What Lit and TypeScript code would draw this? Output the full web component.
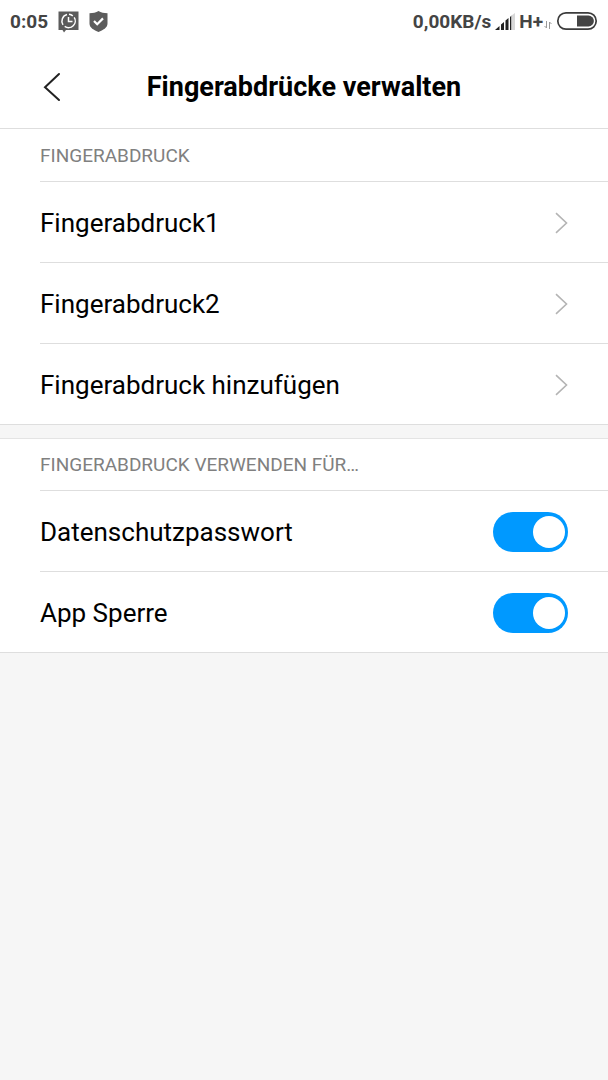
import { LitElement, html, css, svg } from "lit";
import { customElement, property, state } from "lit/decorators.js";

@customElement("status-bar")
class StatusBar extends LitElement {
  static styles = css`
    :host {
      display: flex;
      align-items: center;
      justify-content: space-between;
      box-sizing: border-box;
      height: 44px;
      padding: 0 10px;
      color: #444;
      font-size: 19px;
      font-weight: 700;
      line-height: 24px;
    }
    .side {
      display: flex;
      align-items: center;
    }
    svg {
      display: block;
      flex: none;
    }
    .left {
      gap: 10px;
    }
    .right {
      gap: 4px;
    }
    .network {
      display: flex;
      align-items: center;
      gap: 1px;
    }
    .arrows {
      margin-top: 6px;
    }
    .battery {
      margin-bottom: 2px;
    }
  `;

  render() {
    return html`
      <div class="side left">
        <span>0:05</span>
        <svg width="21" height="22" viewBox="0 0 21 22" aria-hidden="true">
          <path d="M.5 .5h20v18.500H8L6 21.500 4.500 19H.5z" fill="#5c5c5c" />
          <path d="M9 3.600A6.700 6.700 0 0 0 5 13.800M6.700 15.400A6.700 6.700 0 0 0 16.200 6.300M14.800 4.800A6.700 6.700 0 0 0 11 3.300" fill="none" stroke="#fff" stroke-width="1.500" />
          <path d="M10.500 6v4.500h4" fill="none" stroke="#fff" stroke-width="1.500" />
        </svg>
        <svg width="19" height="22" viewBox="0 0 19 22" aria-hidden="true">
          <path d="M9.500 0C7 1.600 4 2.200.5 2.200v10.300c0 4.400 4.500 6.500 9 8.500 4.500-2 9-4.100 9-8.500V2.200C15 2.200 12 1.600 9.500 0z" fill="#5c5c5c" />
          <path d="M5 10l3.200 3.200L14 7.400" fill="none" stroke="#fff" stroke-width="2.200" />
        </svg>
      </div>
      <div class="side right">
        <span>0,00KB/s</span>
        <svg width="20" height="18" viewBox="0 0 20 18" aria-hidden="true">
          <path d="M0 17l4.500-4v4zM6 11.500L9 9v8H6zM10.500 7.500L13.500 5v12h-3zM15 4l1.500-1.500V17H15z" fill="#222" />
          <path d="M16.500 2.500L20 0v17h-3.500z" fill="#d8d8d8" />
        </svg>
        <span class="network">
          <span>H+</span>
          <svg class="arrows" width="8" height="8" viewBox="0 0 8 8" aria-hidden="true">
            <path d="M2.500 0v7M.5 5l2 2M5.500 8V1M7.500 3l-2-2" fill="none" stroke="#999" />
          </svg>
        </span>
        <svg class="battery" width="42" height="20" viewBox="0 0 42 20" aria-hidden="true">
          <rect x="1.800" y="1.800" width="38.400" height="16.400" rx="8.200" fill="none" stroke="#3c3c3c" stroke-width="1.700" />
          <path d="M21 4.600h11.500a5.400 5.400 0 0 1 0 10.800H21z" fill="#444" />
        </svg>
      </div>
    `;
  }
}

@customElement("toggle-row")
class ToggleRow extends LitElement {
  @property() label = "";
  @state() private on = true;

  static styles = css`
    :host {
      display: block;
    }
    .row {
      display: flex;
      align-items: center;
      justify-content: space-between;
      box-sizing: border-box;
      height: 80px;
      padding: 2px 40px 0 0;
      cursor: pointer;
    }
    .switch {
      appearance: none;
      display: flex;
      justify-content: flex-end;
      box-sizing: border-box;
      width: 75px;
      height: 40px;
      margin: 0;
      padding: 4px 3px;
      border-radius: 20px;
      background: #0099ff;
      cursor: pointer;
    }
    .switch::before {
      content: "";
      width: 32px;
      height: 32px;
      border-radius: 50%;
      background: #fff;
    }
    .switch:not(:checked) {
      justify-content: flex-start;
      background: #ccc;
    }
  `;

  private onChange(e: Event) {
    this.on = (e.target as HTMLInputElement).checked;
  }

  render() {
    return html`
      <label class="row">
        <span>${this.label}</span>
        <input class="switch" type="checkbox" role="switch" .checked=${this.on} @change=${this.onChange} />
      </label>
    `;
  }
}

@customElement("app-root")
class AppRoot extends LitElement {
  static styles = css`
    :host {
      display: block;
      min-height: 100vh;
      background: #f6f6f6;
      color: #000;
      font-family: Roboto, "Liberation Sans", sans-serif;
    }
    .top,
    .group {
      background: #fff;
      border-bottom: 1px solid #dedede;
    }
    .bar {
      display: grid;
      grid-template-columns: 64px 1fr 64px;
      align-items: center;
      box-sizing: border-box;
      height: 84px;
      padding: 2px 20px 0;
    }
    .back {
      display: flex;
      align-items: center;
      justify-content: center;
      height: 64px;
      padding: 0;
      border: 0;
      background: none;
      cursor: pointer;
    }
    .title {
      margin: 0;
      text-align: center;
      font-size: 27px;
      font-weight: 700;
      line-height: 32px;
    }
    .group + .group {
      margin-top: 13px;
      border-top: 1px solid #e4e4e4;
    }
    .heading {
      margin: 0;
      padding: 15px 0 13px 40px;
      color: #808080;
      font-size: 19px;
      font-weight: 400;
      line-height: 24px;
    }
    .group + .group .heading {
      padding-top: 14px;
    }
    .list {
      margin: 0;
      padding: 0 0 0 40px;
      list-style: none;
      font-size: 26px;
      line-height: 32px;
    }
    .item {
      border-top: 1px solid #dedede;
    }
    .link {
      display: flex;
      align-items: center;
      justify-content: space-between;
      box-sizing: border-box;
      height: 80px;
      padding: 2px 40px 0 0;
      color: inherit;
      text-decoration: none;
    }
  `;

  private entries = ["Fingerabdruck1", "Fingerabdruck2", "Fingerabdruck hinzufügen"];
  private uses = ["Datenschutzpasswort", "App Sperre"];

  private chevron() {
    return html`
      <svg width="13" height="22" viewBox="0 0 13 22" aria-hidden="true">
        ${svg`<path d="M1 1.200l10.500 9.800L1 20.800" fill="none" stroke="#b4b4b4" stroke-width="1.600" />`}
      </svg>
    `;
  }

  render() {
    return html`
      <header class="top">
        <status-bar></status-bar>
        <div class="bar">
          <button class="back" type="button" aria-label="Zurück">
            <svg width="18" height="30" viewBox="0 0 18 30" aria-hidden="true">
              <path d="M16 2L2 15.200 16 28" fill="none" stroke="#222" stroke-width="2" stroke-linecap="round" />
            </svg>
          </button>
          <h1 class="title">Fingerabdrücke verwalten</h1>
        </div>
      </header>
      <main>
        <section class="group">
          <h2 class="heading">FINGERABDRUCK</h2>
          <ul class="list">
            ${this.entries.map(
              (name) => html`<li class="item"><a class="link" href="#"><span>${name}</span>${this.chevron()}</a></li>`
            )}
          </ul>
        </section>
        <section class="group">
          <h2 class="heading">FINGERABDRUCK VERWENDEN FÜR…</h2>
          <ul class="list">
            ${this.uses.map((name) => html`<li class="item"><toggle-row label=${name}></toggle-row></li>`)}
          </ul>
        </section>
      </main>
    `;
  }
}
